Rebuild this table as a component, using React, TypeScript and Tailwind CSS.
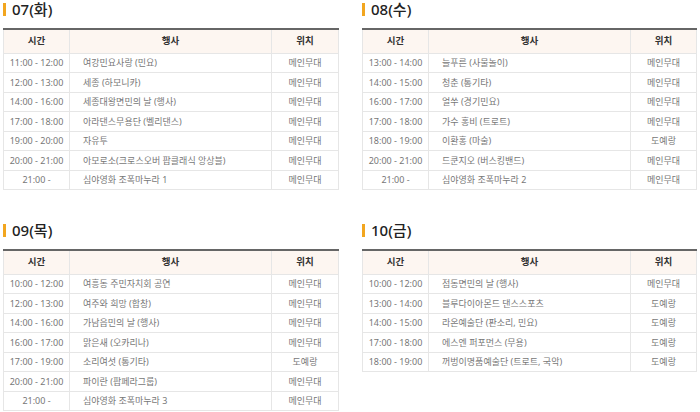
import React from "react";

type Row = { time: string; event: string; place: string };
type Day = { title: string; rows: Row[] };

const days: Day[] = [
  {
    title: "07(화)",
    rows: [
      { time: "11:00 - 12:00", event: "여강민요사랑 (민요)", place: "메인무대" },
      { time: "12:00 - 13:00", event: "세종 (하모니카)", place: "메인무대" },
      { time: "14:00 - 16:00", event: "세종대왕면민의 날 (행사)", place: "메인무대" },
      { time: "17:00 - 18:00", event: "아라댄스무용단 (벨리댄스)", place: "메인무대" },
      { time: "19:00 - 20:00", event: "자유투", place: "메인무대" },
      { time: "20:00 - 21:00", event: "아모로소(크로스오버 팝클래식 앙상블)", place: "메인무대" },
      { time: "21:00 -", event: "심야영화 조폭마누라 1", place: "메인무대" },
    ],
  },
  {
    title: "08(수)",
    rows: [
      { time: "13:00 - 14:00", event: "늘푸른 (사물놀이)", place: "메인무대" },
      { time: "14:00 - 15:00", event: "청춘 (통기타)", place: "메인무대" },
      { time: "16:00 - 17:00", event: "얼쑤 (경기민요)", place: "메인무대" },
      { time: "17:00 - 18:00", event: "가수 홍비 (트로트)", place: "메인무대" },
      { time: "18:00 - 19:00", event: "이환홍 (마술)", place: "도예랑" },
      { time: "20:00 - 21:00", event: "드쿤지오 (버스킹밴드)", place: "메인무대" },
      { time: "21:00 -", event: "심야영화 조폭마누라 2", place: "메인무대" },
    ],
  },
  {
    title: "09(목)",
    rows: [
      { time: "10:00 - 12:00", event: "여흥동 주민자치회 공연", place: "메인무대" },
      { time: "12:00 - 13:00", event: "여주와 희망 (합창)", place: "메인무대" },
      { time: "14:00 - 16:00", event: "가남읍민의 날 (행사)", place: "메인무대" },
      { time: "16:00 - 17:00", event: "맑은새 (오카리나)", place: "메인무대" },
      { time: "17:00 - 19:00", event: "소리여섯 (통기타)", place: "도예랑" },
      { time: "20:00 - 21:00", event: "파이란 (팝페라그룹)", place: "메인무대" },
      { time: "21:00 -", event: "심야영화 조폭마누라 3", place: "메인무대" },
    ],
  },
  {
    title: "10(금)",
    rows: [
      { time: "10:00 - 12:00", event: "점동면민의 날 (행사)", place: "메인무대" },
      { time: "13:00 - 14:00", event: "블루다이아몬드 댄스스포츠", place: "도예랑" },
      { time: "14:00 - 15:00", event: "라온예술단 (판소리, 민요)", place: "도예랑" },
      { time: "17:00 - 18:00", event: "에스엔 퍼포먼스 (무용)", place: "도예랑" },
      { time: "18:00 - 19:00", event: "꺼벙이명품예술단 (트로트, 국악)", place: "도예랑" },
    ],
  },
];

function DaySchedule({ day }: { day: Day }) {
  return (
    <section>
      <h2 className="flex h-[19px] items-center gap-[6px]">
        <span className="h-[13px] w-[3px] bg-[#f2a61f]" />
        <span className="text-[15px] font-medium leading-[19px] text-[#222]">{day.title}</span>
      </h2>
      <table className="mt-[9px] w-full table-fixed border-collapse border-t-2 border-t-[#666]">
        <colgroup>
          <col className="w-[66px]" />
          <col className="w-[202px]" />
          <col />
        </colgroup>
        <thead>
          <tr className="h-[24px] bg-[#fdf6f1] text-[9.5px] font-bold text-[#333]">
            <th className="border border-t-0 border-[#e6e6e6]">시간</th>
            <th className="border border-t-0 border-[#e6e6e6]">행사</th>
            <th className="border border-t-0 border-[#e6e6e6]">위치</th>
          </tr>
        </thead>
        <tbody>
          {day.rows.map((r) => (
            <tr key={r.time + r.event} className="h-[19.5px] text-[9px] text-[#777]">
              <td className="border border-[#e6e6e6] text-center">{r.time}</td>
              <td className="truncate border border-[#e6e6e6] pl-[13px] text-left">{r.event}</td>
              <td className="border border-[#e6e6e6] text-center">{r.place}</td>
            </tr>
          ))}
        </tbody>
      </table>
    </section>
  );
}

export default function App() {
  return (
    <div
      className="h-[412px] w-[700px] overflow-hidden bg-white pl-[3px] pr-[3px] pt-[0px]"
      style={{ fontFamily: '"Noto Sans", "Noto Sans CJK KR", sans-serif' }}
    >
      <div className="grid grid-cols-[336px_335px] gap-x-[23px] gap-y-[31px]">
        {days.map((d) => (
          <DaySchedule key={d.title} day={d} />
        ))}
      </div>
    </div>
  );
}
